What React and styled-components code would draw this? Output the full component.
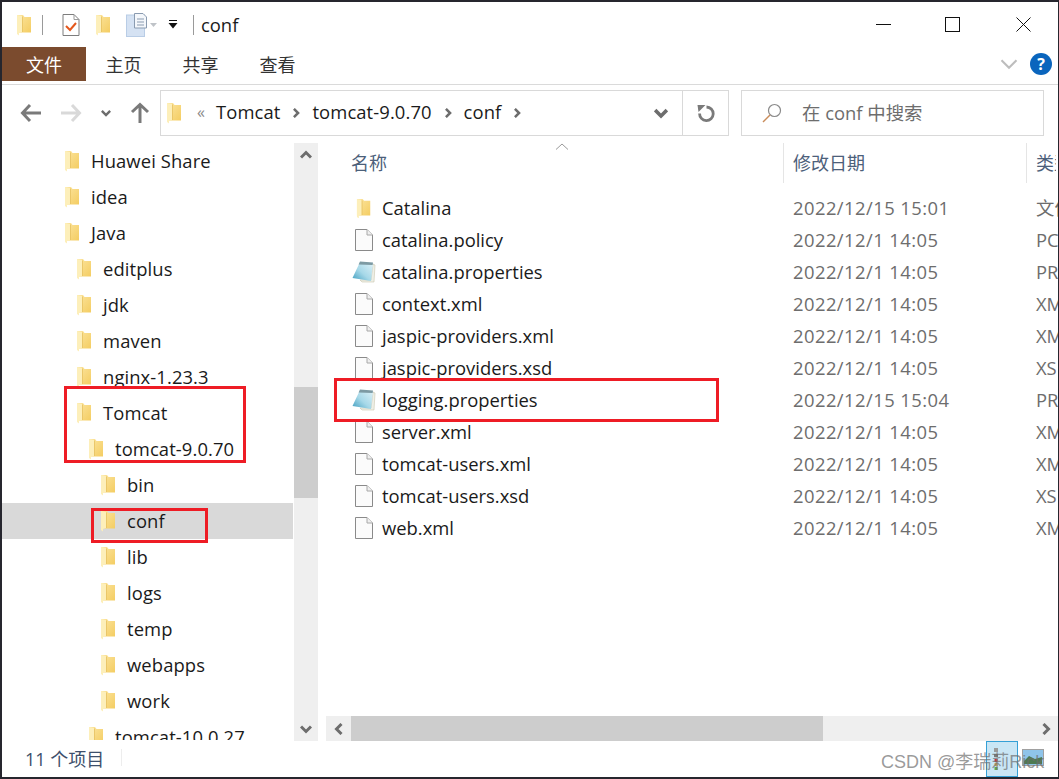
import styled, { createGlobalStyle } from "styled-components";

const GlobalStyle = createGlobalStyle`
  html, body { margin: 0; padding: 0; background: #26262e; }
  * { box-sizing: border-box; }
  #root { width: 1059px; height: 779px; overflow: hidden; }
`;

const FONT = `"Open Sans", "Noto Sans CJK SC", sans-serif`;

// ---- icons ----
const IconDefs = () => (
  <svg width="0" height="0" style={{ position: "absolute" }}>
    <defs>
      <linearGradient id="folderBody" x1="0" y1="0" x2="1" y2="1">
        <stop offset="0" stopColor="#fce5a0" />
        <stop offset="1" stopColor="#f4cd62" />
      </linearGradient>
      <linearGradient id="noteBody" x1="1" y1="0" x2="0" y2="1">
        <stop offset="0" stopColor="#dff2f8" />
        <stop offset="0.55" stopColor="#a6d8e8" />
        <stop offset="1" stopColor="#3f9dbf" />
      </linearGradient>
    </defs>
  </svg>
);

const Folder = ({ size = 20 }) => (
  <svg width={size * 0.8} height={size * 1.1} viewBox="1 0 16 22">
    <path d="M2 1 H8 L9.5 3 H16 V18.5 H2 Z" fill="url(#folderBody)" />
    <path d="M2 1 L7 2 V18 L4 19 V21.5 L2 20 Z" fill="#fdefba" />
    <path d="M7 2 L7.8 3 V18 L7 18 Z" fill="#e6c263" />
  </svg>
);

const PageIcon = () => (
  <svg width="18" height="22" viewBox="0 0 18 22">
    <path d="M0.5 0.5 H12 L17.5 6 V21.5 H0.5 Z" fill="#fbfbfb" stroke="#8a8a8a" strokeWidth="1" />
    <path d="M12 0.5 V6 H17.5" fill="#efefef" stroke="#a8a8a8" strokeWidth="1" />
  </svg>
);

const NoteIcon = () => (
  <svg width="24" height="22" viewBox="0 0 24 22">
    <path d="M21 3 L23 4 L22 21 L10 21 L8 19 L19 19 Z" fill="#efefe6" stroke="#c9c6ae" strokeWidth="0.6" />
    <path d="M8 1 L21 2 L19 20 L0.5 17 Z" fill="url(#noteBody)" />
    <path d="M8 0.5 L21 1.5 L20.6 4 L6.6 3.4 Z" fill="#7d9aa3" />
  </svg>
);

const CheckDoc = () => (
  <svg width="18" height="24" viewBox="0 0 18 24">
    <path d="M1 1.5 H12 L17 6.5 V22.5 H1 Z" fill="#fff" stroke="#7d7d7d" />
    <path d="M12 1.5 V6.5 H17" fill="none" stroke="#9a9a9a" />
    <path d="M4 13 L8 17 L14 10" fill="none" stroke="#e4571c" strokeWidth="2" />
  </svg>
);

const CopyDoc = () => (
  <svg width="32" height="24" viewBox="0 0 32 24">
    <rect x="0.5" y="2" width="18" height="21.5" fill="#d5e2f3" stroke="#b9cde6" />
    <path d="M8.5 0.5 H17 L20.5 4 V15 H8.5 Z" fill="#f4f7fb" stroke="#8a9bb0" />
    <path d="M11 6 H18 M11 9 H18 M11 12 H18" stroke="#8a9bb0" />
    <path d="M24 10 H31 L27.5 14 Z" fill="#bfc3c8" />
  </svg>
);

const CaretIcon = () => (
  <svg width="10" height="9" viewBox="0 0 10 9">
    <path d="M1 0.5 H9" stroke="#111" strokeWidth="1" />
    <path d="M0.5 3 H9.5 L5 8.5 Z" fill="#111" />
  </svg>
);

const RefreshIcon = () => (
  <svg width="18" height="18" viewBox="0 0 18 18">
    <path d="M9.5 3 A6.8 6.8 0 1 1 2.6 9.5" fill="none" stroke="#7a7a7a" strokeWidth="2.8" />
    <path d="M0.5 1 H8.5 L1.5 8 Z" fill="#7a7a7a" />
  </svg>
);

const Arrow = ({ dir = "left", color = "#7a7a7a" }) => (
  <svg width="22" height="22" viewBox="0 0 22 22" style={{ transform: dir === "right" ? "scaleX(-1)" : dir === "up" ? "rotate(90deg)" : "none" }}>
    <path d="M2 11 H21 M10 3 L2.5 11 L10 19" fill="none" stroke={color} strokeWidth="3" />
  </svg>
);

const Chevron = ({ dir = "down", size = 12, color = "#6d6d6d", weight = 3 }) => {
  const rot = { down: 0, up: 180, left: 90, right: -90 }[dir];
  return (
    <svg width={size} height={size} viewBox="0 0 12 12" style={{ transform: `rotate(${rot}deg)` }}>
      <path d="M1 3.5 L6 8.5 L11 3.5" fill="none" stroke={color} strokeWidth={weight} />
    </svg>
  );
};

// ---- data ----
const NAV = [
  ["Huawei Share", 0], ["idea", 0], ["Java", 0],
  ["editplus", 1], ["jdk", 1], ["maven", 1], ["nginx-1.23.3", 1], ["Tomcat", 1],
  ["tomcat-9.0.70", 2],
  ["bin", 3], ["conf", 3, true], ["lib", 3], ["logs", 3], ["temp", 3], ["webapps", 3], ["work", 3],
  ["tomcat-10.0.27", 2],
];

const FILES = [
  ["Catalina", "folder", "2022/12/15 15:01", "文件"],
  ["catalina.policy", "page", "2022/12/1 14:05", "PC"],
  ["catalina.properties", "note", "2022/12/1 14:05", "PR"],
  ["context.xml", "page", "2022/12/1 14:05", "XM"],
  ["jaspic-providers.xml", "page", "2022/12/1 14:05", "XM"],
  ["jaspic-providers.xsd", "page", "2022/12/1 14:05", "XS"],
  ["logging.properties", "note", "2022/12/15 15:04", "PR"],
  ["server.xml", "page", "2022/12/1 14:05", "XM"],
  ["tomcat-users.xml", "page", "2022/12/1 14:05", "XM"],
  ["tomcat-users.xsd", "page", "2022/12/1 14:05", "XS"],
  ["web.xml", "page", "2022/12/1 14:05", "XM"],
];

const FILE_ICONS = { folder: <Folder size={19} />, page: <PageIcon />, note: <NoteIcon /> };

export default function App() {
  return (
    <>
      <GlobalStyle />
      <IconDefs />
      <Window>
        <TitleBar>
          <QuickTools>
            <QuickIcon><Folder /></QuickIcon>
            <ThinRule $gap={10} />
            <QuickIcon $gap={19}><CheckDoc /></QuickIcon>
            <QuickIcon $gap={15}><Folder /></QuickIcon>
            <QuickIcon $gap={15}><CopyDoc /></QuickIcon>
            <QuickIcon $gap={10}><CaretIcon /></QuickIcon>
            <ThinRule $gap={15} />
            <TitleText>conf</TitleText>
          </QuickTools>
          <WindowButtons>
            <MinGlyph />
            <MaxGlyph />
            <svg width="15" height="15" viewBox="0 0 15 15">
              <path d="M0.5 0.5 L14.5 14.5 M14.5 0.5 L0.5 14.5" stroke="#111" strokeWidth="1" />
            </svg>
          </WindowButtons>
        </TitleBar>

        <Ribbon>
          <FileTab>文件</FileTab>
          <Tab>主页</Tab>
          <Tab>共享</Tab>
          <Tab>查看</Tab>
          <RibbonEnd>
            <Chevron size={18} color="#bdbdbd" weight={1.4} />
            <Help>?</Help>
          </RibbonEnd>
        </Ribbon>

        <AddressRow>
          <NavButtons>
            <Arrow />
            <Arrow dir="right" color="#d9d9d9" />
            <Chevron size={10} />
            <Arrow dir="up" />
          </NavButtons>
          <AddressBox>
            <Folder />
            <Crumbs>
              <Quote>«</Quote>
              <CrumbText>Tomcat</CrumbText>
              <Chevron dir="right" size={10} />
              <CrumbText>tomcat-9.0.70</CrumbText>
              <Chevron dir="right" size={10} />
              <CrumbText>conf</CrumbText>
              <Chevron dir="right" size={10} />
            </Crumbs>
            <AddressDrop>
              <Chevron size={14} />
            </AddressDrop>
            <Refresh>
              <RefreshIcon />
            </Refresh>
          </AddressBox>
          <SearchBox>
            <svg width="20" height="20" viewBox="0 0 20 20">
              <circle cx="12.5" cy="7.5" r="6" fill="none" stroke="#8a8a8a" strokeWidth="1.2" />
              <path d="M8 12 L1 19" stroke="#c98c5a" strokeWidth="1.4" />
            </svg>
            <SearchText>在 conf 中搜索</SearchText>
          </SearchBox>
        </AddressRow>

        <Main>
          <NavPane>
            <NavList>
              {NAV.map(([name, level, selected]) => (
                <NavRow key={name} $level={level} $selected={selected}>
                  <Folder />
                  <NavLabel>{name}</NavLabel>
                </NavRow>
              ))}
            </NavList>
            <VBar>
              <BarButton><Chevron dir="up" size={12} /></BarButton>
              <VTrack><VThumb /></VTrack>
              <BarButton><Chevron size={12} /></BarButton>
            </VBar>
          </NavPane>

          <FilePane>
            <Header>
              <HeadCell $w={458} $pad={25}>
                名称
                <SortMark>
                  <svg width="14" height="7" viewBox="0 0 14 7">
                    <path d="M1 6.5 L7 1 L13 6.5" fill="none" stroke="#9a9a9a" />
                  </svg>
                </SortMark>
              </HeadCell>
              <HeadCell $w={243} $pad={9}>修改日期</HeadCell>
              <HeadCell $w={29} $pad={9} $last>类型</HeadCell>
            </Header>
            <FileList>
              {FILES.map(([name, icon, date, type]) => (
                <FileRow key={name}>
                  <FileIcon>{FILE_ICONS[icon]}</FileIcon>
                  <FileName>{name}</FileName>
                  <FileDate>{date}</FileDate>
                  <FileType>{type}</FileType>
                </FileRow>
              ))}
            </FileList>
            <HBar>
              <BarButton $h><Chevron dir="left" size={12} /></BarButton>
              <HTrack><HThumb /></HTrack>
              <BarButton $h><Chevron dir="right" size={12} /></BarButton>
            </HBar>
          </FilePane>
        </Main>

        <StatusBar>
          <Count>11 个项目</Count>
          <StatusRule />
        </StatusBar>

        <RedBox $x={64} $y={386} $w={182} $h={77} />
        <RedBox $x={91} $y={508} $w={117} $h={35} />
        <RedBox $x={334} $y={378} $w={385} $h={44} />

        <TrayTip>
          <svg width="6" height="22" viewBox="0 0 6 22">
            <rect x="1" y="0" width="4" height="4" fill="#9a9a9a" />
            <rect x="1" y="6" width="4" height="3" fill="#7a7a7a" />
            <rect x="1.5" y="11" width="3" height="3" fill="#c33" />
            <rect x="1.5" y="15" width="3" height="3" fill="#d9b44a" />
            <rect x="1.5" y="19" width="3" height="3" fill="#6a4" />
          </svg>
        </TrayTip>
        <TrayPicture>
          <svg width="22" height="17" viewBox="0 0 22 17">
            <rect x="0.5" y="0.5" width="21" height="16" fill="#8fc4ea" stroke="#a0a0a0" />
            <path d="M2 12 L7 7 L13 10 L20 8 V15 H2 Z" fill="#4d7a52" />
          </svg>
        </TrayPicture>
        <Watermark>CSDN @李瑞莉Rick</Watermark>
      </Window>
    </>
  );
}

// ---- styles ----
const Window = styled.div`
  position: relative;
  width: 1056px;
  height: 775px;
  margin: 2px 0 0 2px;
  background: #fff;
  font-family: ${FONT};
  font-size: 18.4px;
  display: flex;
  flex-direction: column;
  overflow: hidden;
`;

const TitleBar = styled.div`
  height: 45px;
  flex: none;
  display: flex;
  align-items: center;
  justify-content: space-between;
  padding: 0 27px 0 14px;
`;

const QuickTools = styled.div`
  display: flex;
  align-items: center;
`;

const QuickIcon = styled.div`
  display: flex;
  align-items: center;
  margin-left: ${({ $gap }) => $gap || 0}px;
`;

const ThinRule = styled.div`
  width: 1px;
  height: 20px;
  background: #9a9a9a;
  margin-left: ${({ $gap }) => $gap}px;
`;

const TitleText = styled.span`
  font-size: 18.4px;
  color: #1a1a1a;
  margin-left: 7px;
`;

const WindowButtons = styled.div`
  display: flex;
  align-items: center;
  gap: 54px;
`;

const MinGlyph = styled.div`
  width: 15px;
  height: 1px;
  background: #111;
`;

const MaxGlyph = styled.div`
  width: 15px;
  height: 15px;
  border: 1px solid #111;
  margin-right: 2px;
`;

const Ribbon = styled.div`
  height: 38px;
  flex: none;
  display: flex;
  align-items: flex-start;
  border-bottom: 1px solid #dadada;
`;

const FileTab = styled.div`
  width: 84px;
  height: 34px;
  margin-right: -1px;
  background: #7b4b2e;
  color: #fff;
  font-size: 18px;
  display: flex;
  align-items: center;
  justify-content: center;
`;

const Tab = styled.div`
  width: 77px;
  height: 34px;
  color: #333;
  font-size: 18px;
  display: flex;
  align-items: center;
  justify-content: center;
`;

const RibbonEnd = styled.div`
  margin-left: auto;
  display: flex;
  align-items: center;
  gap: 12px;
  height: 34px;
  padding-right: 6px;
`;

const Help = styled.div`
  width: 22px;
  height: 22px;
  border-radius: 50%;
  background: #0a65bd;
  color: #fff;
  font-weight: 700;
  font-size: 16px;
  display: flex;
  align-items: center;
  justify-content: center;
`;

const AddressRow = styled.div`
  height: 58px;
  flex: none;
  display: flex;
  align-items: flex-start;
  padding: 5px 0 0 18px;
`;

const NavButtons = styled.div`
  width: 140px;
  height: 46px;
  flex: none;
  display: flex;
  align-items: center;
  justify-content: space-between;
  padding-right: 9px;
`;

const AddressBox = styled.div`
  width: 569px;
  height: 46px;
  flex: none;
  border: 1px solid #d9d9d9;
  display: flex;
  align-items: center;
  padding-left: 5px;
`;

const Crumbs = styled.div`
  display: flex;
  align-items: center;
  gap: 11px;
  margin-left: 15px;
  color: #1a1a1a;
  letter-spacing: 0.1px;
`;

const CrumbText = styled.span`
  padding-bottom: 3px;
`;

const Quote = styled.span`
  color: #8a8a8a;
  font-size: 16px;
  padding-bottom: 3px;
`;

const AddressDrop = styled.div`
  margin-left: auto;
  width: 44px;
  height: 100%;
  display: flex;
  align-items: center;
  justify-content: center;
  border-right: 1px solid #d9d9d9;
`;

const Refresh = styled.div`
  width: 45px;
  height: 100%;
  display: flex;
  align-items: center;
  justify-content: center;
`;

const SearchBox = styled.div`
  width: 303px;
  height: 46px;
  flex: none;
  margin-left: 12px;
  border: 1px solid #d9d9d9;
  display: flex;
  align-items: center;
  gap: 20px;
  padding-left: 20px;
`;

const SearchText = styled.span`
  color: #6d6d6d;
  padding-bottom: 2px;
`;

const Main = styled.div`
  height: 598px;
  flex: none;
  display: flex;
`;

const NavPane = styled.div`
  width: 316px;
  flex: none;
  display: flex;
`;

const NavList = styled.div`
  width: 291px;
  height: 597px;
  flex: none;
  overflow: hidden;
`;

const NavRow = styled.div`
  height: 36px;
  display: flex;
  align-items: center;
  gap: 11px;
  color: #1a1a1a;
  letter-spacing: 0.1px;
  white-space: nowrap;
  padding-left: ${({ $level }) => 62 + $level * 12}px;
  background: ${({ $selected }) => ($selected ? "#d9d9d9" : "transparent")};
`;

const NavLabel = styled.span`
  padding-bottom: 2px;
`;

const VBar = styled.div`
  width: 24px;
  margin-left: 1px;
  height: 598px;
  background: #efefef;
  display: flex;
  flex-direction: column;
`;

const BarButton = styled.div`
  flex: none;
  width: ${({ $h }) => ($h ? "25px" : "24px")};
  height: 24px;
  display: flex;
  align-items: center;
  justify-content: center;
  background: #efefef;
`;

const VTrack = styled.div`
  flex: 1;
  padding-top: 220px;
`;

const VThumb = styled.div`
  height: 111px;
  background: #cdcdcd;
`;

const FilePane = styled.div`
  flex: 1;
  min-width: 0;
  margin-left: 8px;
  display: flex;
  flex-direction: column;
`;

const Header = styled.div`
  height: 40px;
  flex: none;
  display: flex;
`;

const HeadCell = styled.div`
  position: relative;
  width: ${({ $w }) => $w}px;
  flex: none;
  height: 100%;
  font-size: 18px;
  color: #4c607a;
  padding: 0 0 2px ${({ $pad }) => $pad}px;
  display: flex;
  align-items: center;
  border-right: ${({ $last }) => ($last ? "none" : "1px solid #e5e5e5")};
  white-space: nowrap;
  overflow: hidden;
`;

const SortMark = styled.div`
  position: absolute;
  left: 229px;
  top: 0;
  line-height: 0;
`;

const FileList = styled.div`
  flex: 1;
  padding-top: 9px;
  overflow: hidden;
`;

const FileRow = styled.div`
  height: 32px;
  display: flex;
  align-items: center;
  white-space: nowrap;
  overflow: hidden;
`;

const FileIcon = styled.div`
  width: 24px;
  flex: none;
  margin-left: 26px;
  display: flex;
  align-items: center;
  justify-content: center;
`;

const FileName = styled.div`
  width: 411px;
  flex: none;
  margin-left: 6px;
  padding-bottom: 2px;
  color: #1a1a1a;
`;

const FileDate = styled.div`
  width: 243px;
  flex: none;
  padding-bottom: 2px;
  color: #6d6d6d;
  letter-spacing: 0.45px;
`;

const FileType = styled.div`
  padding-bottom: 2px;
  color: #6d6d6d;
`;

const HBar = styled.div`
  height: 25px;
  flex: none;
  display: flex;
  align-items: center;
  background: #efefef;
`;

const HTrack = styled.div`
  flex: 1;
  height: 100%;
`;

const HThumb = styled.div`
  width: 472px;
  height: 100%;
  background: #cdcdcd;
`;

const StatusBar = styled.div`
  flex: 1;
  display: flex;
  align-items: center;
  padding: 0 0 3px 23px;
`;

const Count = styled.span`
  font-size: 18px;
  color: #3d4f6b;
`;

const StatusRule = styled.div`
  width: 1px;
  height: 17px;
  background: #ededed;
  margin-left: 17px;
`;

const RedBox = styled.div`
  position: absolute;
  left: ${({ $x }) => $x - 2}px;
  top: ${({ $y }) => $y - 2}px;
  width: ${({ $w }) => $w}px;
  height: ${({ $h }) => $h}px;
  border: 3px solid #ee1c25;
`;

const Watermark = styled.div`
  position: absolute;
  left: 879px;
  top: 745px;
  font-family: "Liberation Sans", "Noto Sans CJK SC", sans-serif;
  font-size: 18px;
  color: rgba(110, 110, 110, 0.7);
  white-space: nowrap;
`;

const TrayTip = styled.div`
  position: absolute;
  left: 984px;
  top: 739px;
  width: 32px;
  height: 36px;
  background: #c9e6f5;
  border: 1px solid #35a0d6;
  display: flex;
  align-items: center;
  padding-left: 6px;
`;

const TrayPicture = styled.div`
  position: absolute;
  left: 1020px;
  top: 747px;
  line-height: 0;
`;
